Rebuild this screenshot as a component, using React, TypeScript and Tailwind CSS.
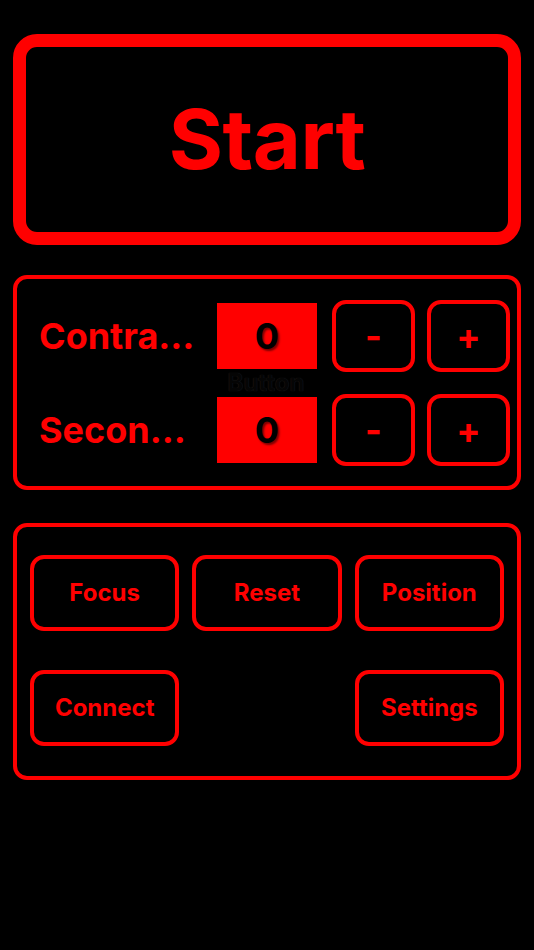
import React from 'react';

const StepRow = ({ label, value }: { label: string; value: number }) => (
  <div className="flex items-center h-[72px]">
    <div className="flex-1 min-w-0 text-[36px] font-bold text-[#ff0000] whitespace-nowrap overflow-hidden">
      {label}
    </div>
    <div className="w-[100px] h-[66px] bg-[#ff0000] flex items-center justify-center text-[36px] font-bold text-black [text-shadow:2px_2px_2px_rgba(110,0,0,0.9)]">
      {value}
    </div>
    <button className="ml-[15px] w-[83px] h-[72px] rounded-[14px] border-4 border-[#ff0000] flex items-center justify-center text-[36px] font-bold text-[#ff0000] leading-none">
      -
    </button>
    <button className="ml-[12px] w-[83px] h-[72px] rounded-[14px] border-4 border-[#ff0000] flex items-center justify-center text-[36px] font-bold text-[#ff0000] leading-none">
      +
    </button>
  </div>
);

const ActionButton = ({ label }: { label: string }) => (
  <button className="h-[76px] rounded-[14px] border-4 border-[#ff0000] flex items-center justify-center text-[24px] font-bold text-[#ff0000]">
    {label}
  </button>
);

export default function App() {
  return (
    <div className="min-h-[950px] bg-black font-['Inter','Liberation_Sans',sans-serif] pt-[34px] px-[13px] flex flex-col">
      <button className="h-[211px] rounded-[24px] border-[13px] border-[#ff0000] flex items-center justify-center text-[83px] font-bold text-[#ff0000] tracking-[-0.5px]">
        Start
      </button>

      <div className="relative mt-[30px] rounded-[14px] border-4 border-[#ff0000] pl-[22px] pr-[7px] pt-[21px] pb-[20px] flex flex-col gap-[22px]">
        <StepRow label="Contra…" value={0} />
        <StepRow label="Secon…" value={0} />
        <div className="absolute left-[199px] top-[92px] w-[100px] text-center text-[24px] leading-none font-bold text-[#050505] [text-shadow:0_0_1px_#262626]">
          Button
        </div>
      </div>

      <div className="mt-[33px] rounded-[14px] border-4 border-[#ff0000] px-[13px] pt-[28px] pb-[30px] grid grid-cols-3 gap-x-[13px] gap-y-[39px]">
        <ActionButton label="Focus" />
        <ActionButton label="Reset" />
        <ActionButton label="Position" />
        <ActionButton label="Connect" />
        <div />
        <ActionButton label="Settings" />
      </div>
    </div>
  );
}
